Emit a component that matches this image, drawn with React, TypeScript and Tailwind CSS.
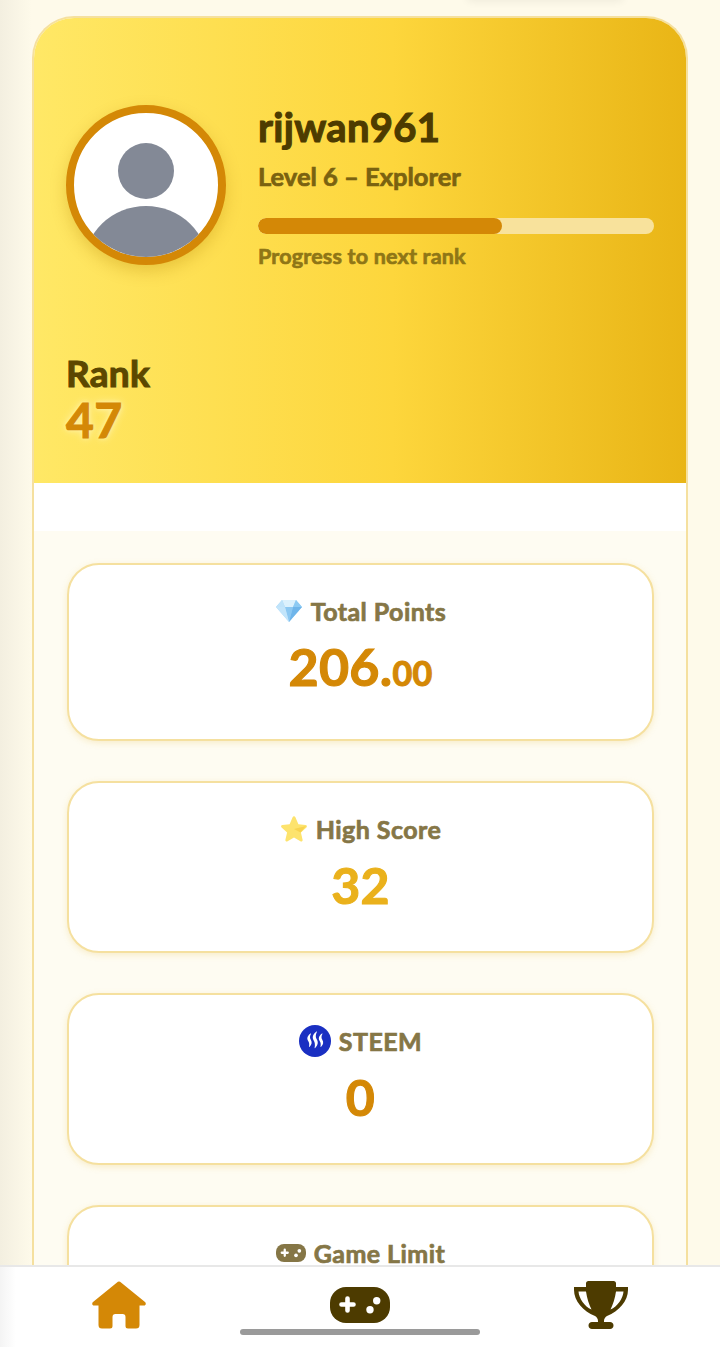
import React from "react";

const font = "font-['Lato','Noto_Sans',sans-serif]";
const heavy = "font-bold [-webkit-text-stroke:1.1px_currentColor] tracking-[0.3px]";
const mid = "font-bold [-webkit-text-stroke:0.7px_currentColor]";

function Diamond() {
  return (
    <svg width="28" height="26" viewBox="0 0 28 26" className="shrink-0">
      <path d="M7 2h14l6 7-13 15L1 9z" fill="#a9d8f7" />
      <path d="M7 2h14l-3 7h-8z" fill="#dcf1fd" />
      <path d="M10 9h8l-4 15z" fill="#8cc8f2" />
      <path d="M1 9h9l4 15z" fill="#c3e5fb" />
      <path d="M18 9h9L14 24z" fill="#6fb5ea" />
      <path d="M7 2l3 7H1z" fill="#bfe3fa" />
      <path d="M21 2l-3 7h9z" fill="#8dcaf3" />
    </svg>
  );
}

function Star() {
  return (
    <svg width="28" height="26" viewBox="0 0 28 26" className="shrink-0">
      <path
        d="M14 1.200c.6 0 1.100.4 1.400 1l3 7 7.200.7c1.300.1 1.800 1.700.8 2.600l-5.500 4.900 1.700 7.300c.3 1.300-1 2.300-2.200 1.600L14 22.600l-6.400 3.700c-1.200.7-2.500-.3-2.200-1.600l1.700-7.300-5.500-4.900c-1-.9-.5-2.500.8-2.600l7.200-.7 3-7c.3-.6.8-1 1.400-1z"
        transform="translate(0 -1)"
        fill="#fde36d"
      />
      <path d="M14 13l12-3-5.500 6.500z" fill="#f8d34f" />
    </svg>
  );
}

function Steem() {
  return (
    <svg width="32" height="32" viewBox="0 0 32 32" className="shrink-0">
      <circle cx="16" cy="16" r="16" fill="#1a2fc2" />
      <g fill="#fff">
        <path d="M11.500 8.500c-4 3-3.500 5.500-2.300 7.500 1 1.700 1.300 3.300.8 5.500-.1.5.3.6.6.3 2.400-2.500 2.600-4.800 1.200-7-1-1.700-1.200-3.700.2-6.100.2-.3-.2-.4-.5-.2z" />
        <path d="M17.500 6.500c-4.600 3.500-4.200 6.500-2.800 9 1.200 2.100 1.600 4.300.9 7.300-.1.500.3.6.6.3 3-3.200 3.200-6 1.500-8.800-1.200-2-1.400-4.500.3-7.600.2-.3-.2-.4-.5-.2z" />
        <path d="M23 8.500c-4 3-3.500 5.500-2.300 7.500 1 1.700 1.300 3.300.8 5.500-.1.500.3.6.6.3 2.400-2.500 2.600-4.800 1.200-7-1-1.700-1.200-3.700.2-6.100.2-.3-.2-.4-.5-.2z" />
      </g>
    </svg>
  );
}

function Pad({ w, h, fill, hole }: { w: number; h: number; fill: string; hole: string }) {
  return (
    <svg width={w} height={h} viewBox="0 0 60 36" className="shrink-0">
      <rect width="60" height="36" rx="16" fill={fill} />
      <path d="M17.500 11.500v12M11.500 17.500h12" stroke={hole} strokeWidth="4.600" strokeLinecap="round" fill="none" />
      <circle cx="46.700" cy="13.700" r="3.700" fill={hole} />
      <circle cx="40" cy="22.700" r="3.700" fill={hole} />
    </svg>
  );
}

function Home() {
  return (
    <svg width="54" height="48" viewBox="0 0 54 48">
      <path
        d="M27 .5c.8 0 1.500.4 2 .9L53 21c1.500 1.300.7 3.500-1 3.500H47.500V44a3.500 3.500 0 0 1-3.500 3.500H36a2.500 2.500 0 0 1-2.500-2.500V36a3 3 0 0 0-3-3h-7a3 3 0 0 0-3 3v9a2.500 2.500 0 0 1-2.500 2.500H10A3.500 3.500 0 0 1 6.500 44V24.500H2c-1.700 0-2.500-2.200-1-3.500L25 1.400c.5-.5 1.200-.9 2-.9z"
        fill="#d48806"
      />
    </svg>
  );
}

function Trophy() {
  return (
    <svg width="54" height="48" viewBox="0 0 54 48">
      <path
        fillRule="evenodd"
        d="M14.500 0h25A2.500 2.500 0 0 1 42 2.500V6h12v3c0 11-9 21-21 26-1.500 1-3 2.500-3 5v1h6c2 0 3.500 1.500 3.500 3.500S38 48 36 48H18c-2 0-3.500-1.500-3.500-3.500S16 41 18 41h6v-1c0-2.500-1.500-4-3-5C9 30 0 20 0 9V6h12V2.500A2.500 2.500 0 0 1 14.500 0zM4.500 10.500c.5 7 6 15 13 18-2.500-5-4.500-11-5.500-18zM49.500 10.500c-.5 7-6 15-13 18 2.500-5 4.500-11 5.500-18z"
        fill="#4d3b00"
      />
    </svg>
  );
}

function Stat({ icon, label, h, children }: { icon: React.ReactNode; label: string; h: string; children: React.ReactNode }) {
  return (
    <div className={`${h} flex flex-col items-center rounded-[32px] border-2 border-[#f5e09f] bg-white pt-[30px] shadow-[0_2px_6px_rgba(230,190,80,0.25)]`}>
      <div className={`flex h-8 items-center gap-2 text-[25px] leading-8 tracking-[0.45px] text-[#857646] ${mid}`}>
        {icon}
        <span>{label}</span>
      </div>
      {children}
    </div>
  );
}

export default function App() {
  return (
    <div className={`relative h-[1347px] w-[720px] overflow-hidden bg-[#fefaea] ${font}`}>
      <div className="pointer-events-none absolute left-0 top-0 h-full w-8 bg-gradient-to-r from-[#f3efe0] to-transparent" />
      <div className="absolute left-[466px] top-[-12px] h-[12px] w-[158px] rounded-lg bg-[#fffef8] shadow-[0_2px_8px_rgba(0,0,0,0.06)]" />

      <div className="relative mx-[32px] mt-4 h-[1400px] w-[656px] overflow-hidden rounded-t-[42px] border-2 border-b-0 border-[#f5e09f] bg-white">
        <div className="h-[465px] bg-[linear-gradient(90deg,#ffe866_0%,#fdd63c_55%,#e9b516_100%)] px-[32px] pt-[87px]">
          <div className="flex gap-8">
            <div className="relative h-[160px] w-[160px] shrink-0 overflow-hidden rounded-full border-[8px] border-[#d48806] bg-white shadow-[0_6px_16px_rgba(180,130,0,0.3)]">
              <div className="mx-auto mt-[30px] h-14 w-14 rounded-full bg-[#838996]" />
              <div className="mx-auto mt-[7px] h-[120px] w-[124px] rounded-[50%] bg-[#838996]" />
            </div>
            <div className="flex-1">
              <div className={`text-[40px] leading-[44px] text-[#4d3b00] ${heavy}`}>rijwan961</div>
              <div className={`mt-[11px] text-[25.5px] leading-8 text-[#7a6210] ${mid}`}>Level 6 – Explorer</div>
              <div className="mt-[26px] h-4 w-full overflow-hidden rounded-full bg-[#f8e29c]">
                <div className="h-full w-[244px] rounded-full bg-[#d48806]" />
              </div>
              <div className={`mt-[7px] text-[21.500px] leading-[30px] tracking-[0.2px] text-[#8f7616] ${mid}`}>Progress to next rank</div>
            </div>
          </div>
          <div className={`mt-[83px] text-[37px] leading-[38px] text-[#5c4700] ${heavy}`}>Rank</div>
          <div className={`mt-[3px] text-[48px] leading-[50px] text-[#d48806] [text-shadow:0_0_10px_#fff3b0,0_0_4px_#fff3b0] ${heavy}`}>47</div>
        </div>

        <div className="h-[48px] bg-white" />

        <div className="flex flex-col gap-[40px] bg-[#fefcf2] pl-[33px] pr-[32px] pt-[32px]">
          <Stat icon={<Diamond />} label="Total Points" h="h-[178px]">
            <div className={`mt-[10px] text-[52px] leading-[58px] text-[#d48806] ${heavy}`}>
              206.<span className="text-[34px]">00</span>
            </div>
          </Stat>
          <Stat icon={<Star />} label="High Score" h="h-[172px]">
            <div className={`mt-[11px] text-[50px] leading-[58px] text-[#eab11c] ${heavy}`}>32</div>
          </Stat>
          <Stat icon={<Steem />} label="STEEM" h="h-[172px]">
            <div className={`mt-[11px] text-[50px] leading-[58px] text-[#d48806] ${heavy}`}>0</div>
          </Stat>
          <Stat icon={<Pad w={30} h={18} fill="#857646" hole="#fff" />} label="Game Limit" h="h-[172px]">
            <div />
          </Stat>
        </div>
      </div>

      <div className="absolute bottom-0 left-0 right-0 flex h-[82px] items-start border-t-2 border-[#e8e8e8] bg-white">
        <div className="flex w-[238px] justify-center pt-[14px]"><Home /></div>
        <div className="flex flex-1 justify-center pt-[20px]"><Pad w={60} h={36} fill="#4d3b00" hole="#fff" /></div>
        <div className="flex w-[238px] justify-center pt-[14px]"><Trophy /></div>
      </div>
      <div className="pointer-events-none absolute bottom-0 left-0 h-[80px] w-4 bg-gradient-to-r from-[#f4f4f4] to-transparent" />
      <div className="absolute bottom-[12px] left-[240px] h-[6px] w-[240px] rounded-full bg-[#9a9a9a]" />
    </div>
  );
}
